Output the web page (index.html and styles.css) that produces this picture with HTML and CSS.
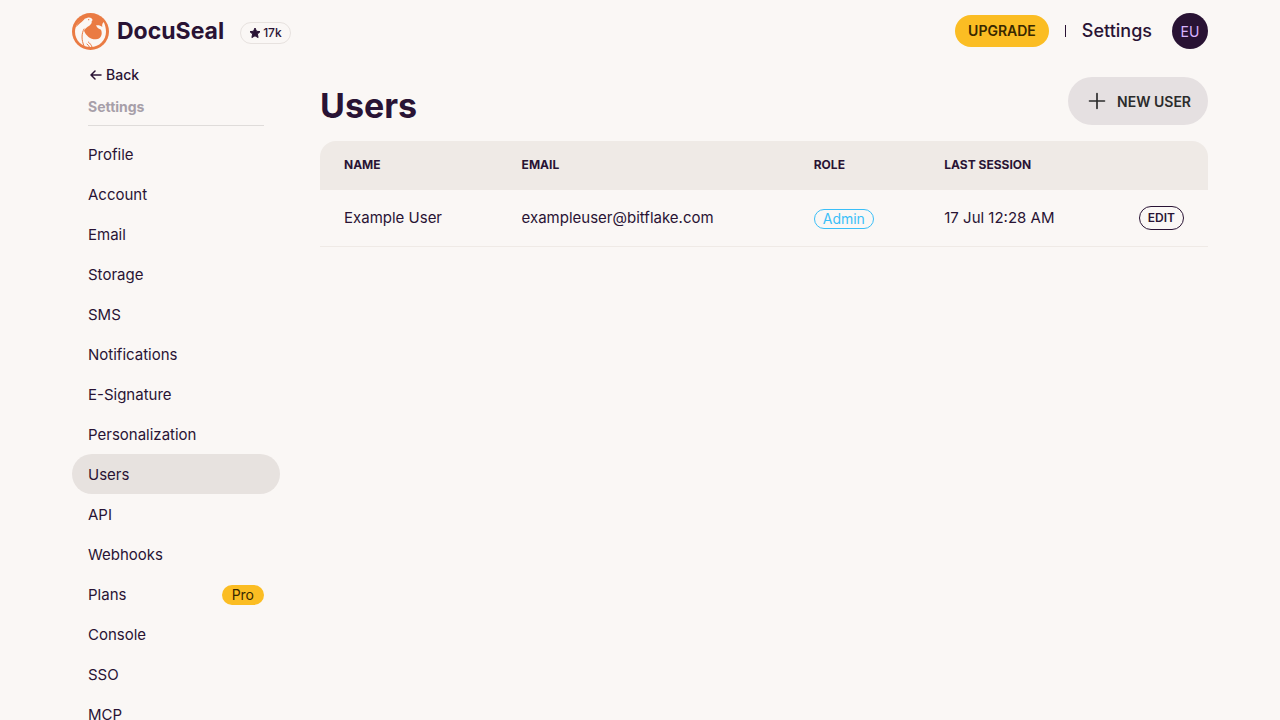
FILE: index.html
```html
<!DOCTYPE html>
<html lang="en">

<head>
  <meta charset="UTF-8" />
  <meta name="viewport" content="width=device-width, initial-scale=1.0" />
  <title>Users | DocuSeal</title>
  <link rel="stylesheet" href="styles.css">
</head>

<body>
  <header class="navbar">
    <div class="brand">
      <a href="#" class="logo">
        <svg class="logo-icon" viewBox="0 0 111 111" aria-hidden="true">
          <circle cx="55.5" cy="55.5" r="55.5" fill="#ea7b43" />
          <path fill="#fbf7f4" d="M62 21C59 14 52 12 45 15C24 20 9 36 9 56C9 82 30 102 56 102C82 102 102 81 102 56C102 45 99 35 95 27C90 32 90 37 91 42C86 37 79 36 72 37C75 45 81 48 87 50C93 64 86 78 72 79C56 80 42 68 36 53C39 46 45 42 52 38C58 34 60 29 59 25Z" />
          <path fill="none" stroke="#ea7b43" stroke-width="3" stroke-linecap="round" d="M36 48C28 62 28 81 36 99M49 87C54 91 58 96 60 102M53 103C51 99 48 95 45 93" />
          <path fill="#ea7b43" d="M40 15C26 20 16 30 12 42C20 35 27 28 32 24C35 21 38 18 40 15Z" />
          <circle cx="50" cy="20" r="2" fill="#ea7b43" />
        </svg>
        <span>DocuSeal</span>
      </a>
      <a href="#" class="stars">
        <svg class="star-icon" viewBox="0 0 24 24" aria-hidden="true">
          <path fill="currentColor" stroke="currentColor" stroke-width="2" stroke-linejoin="round" d="M12 2l3 6.500 7 .8-5.200 4.800 1.400 7-6.200-3.500-6.200 3.500 1.400-7L2 9.300l7-.8z" />
        </svg>
        <span>17k</span>
      </a>
    </div>
    <div class="account">
      <a href="#" class="upgrade">Upgrade</a>
      <span class="divider"></span>
      <a href="#" class="settings-link">Settings</a>
      <button type="button" class="avatar" aria-label="Account menu">EU</button>
    </div>
  </header>

  <div class="layout">
    <nav class="sidebar" aria-label="Settings">
      <a href="#" class="back">
        <svg class="back-icon" viewBox="0 0 12 12" aria-hidden="true">
          <path fill="none" stroke="currentColor" stroke-width="1.5" stroke-linecap="round" stroke-linejoin="round" d="M11 6H1M5 2L1 6l4 4" />
        </svg>
        <span>Back</span>
      </a>
      <p class="menu-title">Settings</p>
      <ul class="menu">
        <li><a href="#">Profile</a></li>
        <li><a href="#">Account</a></li>
        <li><a href="#">Email</a></li>
        <li><a href="#">Storage</a></li>
        <li><a href="#">SMS</a></li>
        <li><a href="#">Notifications</a></li>
        <li><a href="#">E-Signature</a></li>
        <li><a href="#">Personalization</a></li>
        <li><a href="#" class="active">Users</a></li>
        <li><a href="#">API</a></li>
        <li><a href="#">Webhooks</a></li>
        <li><a href="#">Plans <span class="pro">Pro</span></a></li>
        <li><a href="#">Console</a></li>
        <li><a href="#">SSO</a></li>
        <li><a href="#">MCP</a></li>
      </ul>
    </nav>

    <main class="content">
      <div class="title-row">
        <h1>Users</h1>
        <button type="button" class="new-user">
          <svg class="plus-icon" viewBox="0 0 24 24" aria-hidden="true">
            <path fill="none" stroke="currentColor" stroke-width="2" stroke-linecap="round" d="M12 3v18M3 12h18" />
          </svg>
          <span>New User</span>
        </button>
      </div>
      <table class="users">
        <thead>
          <tr>
            <th class="col-name">Name</th>
            <th class="col-email">Email</th>
            <th class="col-role">Role</th>
            <th class="col-session">Last session</th>
            <th class="col-actions"></th>
          </tr>
        </thead>
        <tbody>
          <tr>
            <td>Example User</td>
            <td>exampleuser@bitflake.com</td>
            <td><span class="role">Admin</span></td>
            <td>17 Jul 12:28 AM</td>
            <td class="actions"><a href="#" class="edit">Edit</a></td>
          </tr>
        </tbody>
      </table>
    </main>
  </div>
</body>

</html>
```

FILE: styles.css
```css
* {
  box-sizing: border-box;
}

body {
  max-width: 1152px;
  margin: 0 auto;
  padding: 0 8px;
  background: #faf7f5;
  color: #291334;
  font-family: Inter, "Liberation Sans", sans-serif;
  font-size: 15px;
  line-height: 24px;
}

a {
  color: inherit;
  text-decoration: none;
}

button {
  border: none;
  font-family: inherit;
  cursor: pointer;
}

/* Navbar */
.navbar {
  display: flex;
  align-items: center;
  justify-content: space-between;
  height: 62px;
}

.brand,
.account,
.logo,
.stars {
  display: flex;
  align-items: center;
}

.brand {
  gap: 16px;
}

.logo {
  gap: 8px;
  font-size: 23px;
  font-weight: 700;
  line-height: 36px;
}

.logo-icon {
  width: 37px;
  height: 37px;
}

.stars {
  gap: 2px;
  height: 22px;
  margin-top: 4px;
  padding: 0 8px;
  border: 1px solid #e7e2df;
  border-radius: 11px;
  font-size: 12px;
  font-weight: 500;
}

.star-icon {
  width: 12px;
  height: 12px;
}

.account {
  gap: 16px;
}

.upgrade {
  height: 32px;
  padding: 0 13px;
  border-radius: 16px;
  background: #fbbd23;
  color: #382800;
  font-size: 14px;
  font-weight: 600;
  line-height: 32px;
  text-transform: uppercase;
}

.divider {
  width: 1px;
  height: 12px;
  background: #291334;
}

.settings-link {
  font-size: 18px;
  font-weight: 500;
}

.avatar {
  width: 36px;
  height: 36px;
  margin-left: 4px;
  padding: 0;
  border-radius: 50%;
  background: #291334;
  color: #d8b4fe;
  font-size: 14px;
}

/* Sidebar */
.layout {
  display: flex;
  gap: 40px;
}

.sidebar {
  flex: 0 0 208px;
}

.back {
  display: flex;
  align-items: center;
  gap: 4px;
  height: 26px;
  padding-left: 18px;
  font-size: 14px;
  font-weight: 500;
}

.back-icon {
  width: 12px;
  height: 12px;
}

.menu-title {
  margin: 0 16px 8px;
  padding: 7px 0 6px;
  border-bottom: 1px solid #dfdcda;
  color: #a79fa9;
  font-size: 14px;
  font-weight: 700;
}

.menu {
  margin: 0;
  padding: 0;
  list-style: none;
}

.menu a {
  display: flex;
  align-items: center;
  justify-content: space-between;
  height: 40px;
  padding: 1px 16px 0;
  border-radius: 20px;
}

.menu a:hover,
.menu .active {
  background: #e7e2df;
}

.pro {
  height: 20px;
  padding: 0 10px;
  border-radius: 10px;
  background: #fbbd23;
  color: #382800;
  font-size: 14px;
  line-height: 20px;
}

/* Content */
.content {
  flex: 1;
  min-width: 0;
  padding-top: 15px;
}

.title-row {
  display: flex;
  align-items: flex-end;
  justify-content: space-between;
  margin-bottom: 16px;
}

h1 {
  margin: 0;
  font-size: 34px;
  font-weight: 700;
  line-height: 38px;
}

.new-user {
  display: flex;
  align-items: center;
  gap: 10px;
  height: 48px;
  padding: 0 17px 0 19px;
  border-radius: 24px;
  background: #e5e0e1;
  color: #2b2b2b;
  font-size: 14px;
  font-weight: 600;
  text-transform: uppercase;
}

.plus-icon {
  width: 20px;
  height: 20px;
}

.users {
  width: 100%;
  border-collapse: separate;
  border-spacing: 0;
  table-layout: fixed;
  text-align: left;
}

.users th {
  height: 49px;
  padding: 0 0 2px 24px;
  background: #efeae6;
  font-size: 12px;
  font-weight: 700;
  line-height: 16px;
  text-transform: uppercase;
}

.users th:first-child {
  border-top-left-radius: 16px;
}

.users th:last-child {
  border-top-right-radius: 16px;
}

.users td {
  height: 57px;
  padding: 0 0 0 24px;
  border-bottom: 1px solid #efeae6;
  white-space: nowrap;
}

.col-name {
  width: 20%;
}

.col-email {
  width: 32.9%;
}

.col-role {
  width: 14.7%;
}

.users .actions {
  padding-right: 24px;
  text-align: right;
}

.role,
.edit {
  display: inline-block;
  border: 1px solid currentColor;
  vertical-align: middle;
}

.role {
  padding: 0 8px;
  border-radius: 10px;
  color: #3abff8;
  font-size: 14px;
  line-height: 18px;
}

.edit {
  padding: 0 8px;
  border-radius: 12px;
  font-size: 12px;
  font-weight: 600;
  line-height: 22px;
  text-transform: uppercase;
}
```
